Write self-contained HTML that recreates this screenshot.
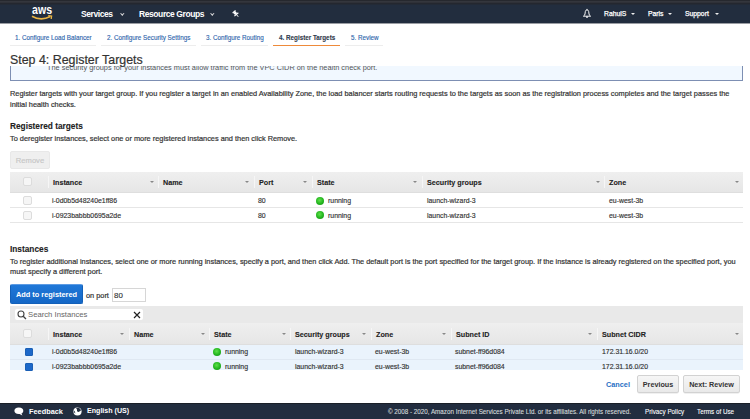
<!DOCTYPE html>
<html><head><meta charset="utf-8">
<style>
*{margin:0;padding:0;box-sizing:border-box}
html,body{width:750px;height:419px;overflow:hidden;background:#fff;font-family:"Liberation Sans",sans-serif;color:#444}
.a{position:absolute;white-space:nowrap}
#hdr{position:absolute;left:0;top:0;width:750px;height:23px;background:#222d3e;box-shadow:0 1px 0 rgba(30,38,52,0.45)}
#hdr .t{position:absolute;color:#fff;font-weight:bold;font-size:8.5px;top:9px;letter-spacing:-0.42px}
#hdr .r{position:absolute;color:#fff;font-size:6.8px;top:10px;-webkit-text-stroke:0.25px #fff}
.chev{position:absolute;width:2.6px;height:2.6px;border-right:0.9px solid #ddd;border-bottom:0.9px solid #ddd;transform:rotate(45deg)}
.car{position:absolute;width:0;height:0;border-left:2px solid transparent;border-right:2px solid transparent;border-top:2.2px solid #eee}
.tab{position:absolute;top:33.5px;font-size:6.3px;color:#2b63ab;-webkit-text-stroke:0.12px #2b63ab}
.tabu{position:absolute;top:45px;height:1px;background:#ededed}
.body{font-size:7.36px;color:#333;line-height:10.7px;-webkit-text-stroke:0.2px #333}
.thd{position:absolute;height:21px;background:linear-gradient(#efefef,#e6e6e6);border-bottom:1px solid #dedede}
.th{position:absolute;font-weight:bold;font-size:7.2px;color:#222;-webkit-text-stroke:0.1px #222}
.td{position:absolute;font-size:6.9px;color:#333;-webkit-text-stroke:0.15px #333}
.arr{position:absolute;width:0;height:0;border-left:2px solid transparent;border-right:2px solid transparent;border-top:2px solid #888}
.div{position:absolute;width:1px;background:#f6f6f6}
.cb{position:absolute;width:9px;height:9px;border:1px solid #dcdcdc;border-radius:2px;background:#f6f6f6}
.dot{position:absolute;width:8px;height:8px;border-radius:50%;background:radial-gradient(circle at 45% 40%,#5fe04a,#22b51e 55%,#178a14)}
.rl{position:absolute;height:1px;background:#e6e6e6}
#ftr{position:absolute;left:0;top:403px;width:750px;height:16px;background:#222d3f;border-top:1px solid #1a1f28}
.btn{position:absolute;border:1px solid #d2d2d2;border-radius:2px;background:linear-gradient(#f6f6f6,#e9e9e9);box-shadow:0 0.5px 0.5px rgba(0,0,0,0.12);font-weight:bold;color:#333;font-size:7.2px;text-align:center}
</style></head><body>
<div id="hdr">
  <div style="position:absolute;left:0;top:0;width:750px;height:5px;background:linear-gradient(#26282e 0,#26282e 1px,#34363d 1px,#34363d 2px,#2f3138 2px,#2f3138 3px,#24272f 3px,#24272f 4px,#232a36 4px,#232a36 5px)"></div>
  <svg class="a" style="left:30px;top:0px" width="26" height="23" viewBox="0 0 26 23"><text x="2" y="0" font-family="Liberation Sans" font-size="10.6" font-weight="bold" fill="#fff" transform="translate(0,13.6) scale(1,1.27)">aws</text><path d="M2 16.3 Q11 21.5 20.3 16.6" stroke="#e9b443" stroke-width="1.7" fill="none"/><path d="M18.2 15.6 L21.6 16 L21.2 19" stroke="#e9b443" stroke-width="1.3" fill="none"/></svg>
  <div class="t" style="left:81px">Services</div>
  <div class="chev" style="left:121px;top:12px"></div>
  <div class="t" style="left:139px">Resource Groups</div>
  <div class="chev" style="left:211px;top:12px"></div>
  <svg class="a" style="left:231.5px;top:9.7px" width="8" height="8" viewBox="0 0 10 10"><g transform="rotate(-40 5 5)" fill="#fff"><rect x="2.6" y="0.6" width="4.8" height="1.4"/><rect x="3.3" y="1.8" width="3.4" height="3.4"/><rect x="1.8" y="5" width="6.4" height="1.4"/><rect x="4.55" y="6.2" width="0.9" height="3.4"/></g></svg>
  <svg class="a" style="left:581.6px;top:8px" width="10" height="11" viewBox="0 0 10 11"><path d="M1.4 8.2 Q2.7 7.6 3 6 L3.3 3.6 Q3.6 1.9 5 1.8 Q6.4 1.9 6.7 3.6 L7 6 Q7.3 7.6 8.6 8.2 Z" stroke="#fff" stroke-width="0.95" fill="none" stroke-linejoin="round"/><circle cx="5" cy="9.1" r="0.9" fill="#fff"/><circle cx="5" cy="1.3" r="0.5" fill="#fff"/></svg>
  <div class="r" style="left:604px">RahulS</div>
  <div class="car" style="left:631px;top:13px"></div>
  <div class="r" style="left:648px">Paris</div>
  <div class="car" style="left:668px;top:13px"></div>
  <div class="r" style="left:685px">Support</div>
  <div class="car" style="left:715px;top:13px"></div>
</div>

<div class="tab" style="left:15px">1. Configure Load Balancer</div>
<div class="tabu" style="left:10px;width:86px"></div>
<div class="tab" style="left:107px">2. Configure Security Settings</div>
<div class="tabu" style="left:101px;width:95px"></div>
<div class="tab" style="left:206px">3. Configure Routing</div>
<div class="tabu" style="left:201px;width:67px"></div>
<div class="tab" style="left:279px;color:#333;font-weight:bold">4. Register Targets</div>
<div class="tabu" style="left:273px;width:67px;height:1px;background:#ee8a3a"></div>
<div class="tab" style="left:351px">5. Review</div>
<div class="tabu" style="left:345px;width:38px"></div>

<!-- info box -->
<div class="a" style="left:10px;top:60px;width:733px;height:21px;background:#f1f8ff;border:1px solid #7d8fb3;border-top:none"></div>
<div class="a body" style="left:47px;top:63px;color:#555;-webkit-text-stroke:0">The security groups for your instances must allow traffic from the VPC CIDR on the health check port.</div>
<div class="a" style="left:0;top:46px;width:750px;height:20px;background:#fff"></div>
<div class="a" style="left:10px;top:53px;font-size:12.4px;color:#333;-webkit-text-stroke:0.2px #333">Step 4: Register Targets</div>

<div class="a body" style="left:10px;top:89px">Register targets with your target group. If you register a target in an enabled Availability Zone, the load balancer starts routing requests to the targets as soon as the registration process completes and the target passes the<br>initial health checks.</div>

<div class="a" style="left:10px;top:121px;font-weight:bold;font-size:8.3px;color:#222;-webkit-text-stroke:0.1px #222">Registered targets</div>
<div class="a body" style="left:10px;top:133.5px">To deregister instances, select one or more registered instances and then click Remove.</div>
<div class="a" style="left:10px;top:151px;width:40px;height:18px;border:1px solid #e8e8e8;border-radius:2px;background:#efefef;color:#c6c6c6;font-size:7.6px;text-align:center;line-height:17.5px;-webkit-text-stroke:0.15px #c6c6c6">Remove</div>

<!-- table 1 -->
<div class="thd" style="left:10px;top:172px;width:733px"></div>
<div class="cb" style="left:23px;top:177px"></div>
<div class="div" style="left:48px;top:176px;height:12px"></div>
<div class="th" style="left:53px;top:178px">Instance</div>
<div class="arr" style="left:150px;top:181px"></div><div class="div" style="left:158px;top:176px;height:12px"></div>
<div class="th" style="left:163px;top:178px">Name</div>
<div class="arr" style="left:245px;top:181px"></div><div class="div" style="left:254px;top:176px;height:12px"></div>
<div class="th" style="left:259px;top:178px">Port</div>
<div class="arr" style="left:303px;top:181px"></div><div class="div" style="left:312px;top:176px;height:12px"></div>
<div class="th" style="left:317px;top:178px">State</div>
<div class="arr" style="left:413px;top:181px"></div><div class="div" style="left:422px;top:176px;height:12px"></div>
<div class="th" style="left:427px;top:178px">Security groups</div>
<div class="arr" style="left:596px;top:181px"></div><div class="div" style="left:604px;top:176px;height:12px"></div>
<div class="th" style="left:609px;top:178px">Zone</div>
<div class="arr" style="left:735px;top:181px"></div>

<div class="cb" style="left:23px;top:196px"></div>
<div class="td" style="left:52px;top:197px">i-0d0b5d48240e1ff86</div>
<div class="td" style="left:258px;top:197px">80</div>
<div class="dot" style="left:316px;top:196.5px"></div>
<div class="td" style="left:328px;top:197px">running</div>
<div class="td" style="left:427px;top:197px">launch-wizard-3</div>
<div class="td" style="left:609px;top:197px">eu-west-3b</div>
<div class="rl" style="left:10px;top:207px;width:733px"></div>
<div class="cb" style="left:23px;top:211px"></div>
<div class="td" style="left:52px;top:212px">i-0923babbb0695a2de</div>
<div class="td" style="left:258px;top:212px">80</div>
<div class="dot" style="left:316px;top:211px"></div>
<div class="td" style="left:328px;top:212px">running</div>
<div class="td" style="left:427px;top:212px">launch-wizard-3</div>
<div class="td" style="left:609px;top:212px">eu-west-3b</div>
<div class="rl" style="left:10px;top:222px;width:733px"></div>

<div class="a" style="left:10px;top:243.7px;font-weight:bold;font-size:8.3px;color:#222;-webkit-text-stroke:0.1px #222">Instances</div>
<div class="a body" style="left:10px;top:256.5px;line-height:10.7px">To register additional instances, select one or more running instances, specify a port, and then click Add. The default port is the port specified for the target group. If the instance is already registered on the specified port, you<br>must specify a different port.</div>

<div class="a" style="left:10px;top:284px;width:73px;height:20px;background:linear-gradient(#2078d8,#1467c6);border:1px solid #1360b8;border-top-color:#5d9be3;border-radius:2px;color:#fff;font-weight:bold;font-size:7.4px;text-align:center;line-height:20.5px">Add to registered</div>
<div class="a body" style="left:86px;top:290.5px">on port</div>
<div class="a" style="left:112px;top:288px;width:34px;height:14px;border:1px solid #d6d6d6;background:#fff;font-size:7.9px;color:#333;padding-left:1px;line-height:13.5px;-webkit-text-stroke:0.15px #333">80</div>

<!-- table 2 -->
<div class="a" style="left:10px;top:306px;width:733px;height:17px;background:#e9e9e9"></div>
<div class="a" style="left:15px;top:308.5px;width:128px;height:11.5px;background:#fff;border-radius:2px"></div>
<svg class="a" style="left:17px;top:310px" width="10" height="10" viewBox="0 0 10 10"><circle cx="4" cy="4" r="3" stroke="#444" stroke-width="1.1" fill="none"/><path d="M6.2 6.2 L9 9" stroke="#444" stroke-width="1.3"/></svg>
<div class="a" style="left:28px;top:310px;font-size:7.7px;color:#666">Search Instances</div>
<svg class="a" style="left:133px;top:311px" width="8" height="8" viewBox="0 0 8 8"><path d="M1 1 L7 7 M7 1 L1 7" stroke="#222" stroke-width="1.2"/></svg>

<div class="thd" style="left:10px;top:323px;width:733px;height:22px"></div>
<div class="cb" style="left:23px;top:329px"></div>
<div class="div" style="left:48px;top:328px;height:12px"></div>
<div class="th" style="left:53px;top:330px">Instance</div>
<div class="arr" style="left:120px;top:333px"></div><div class="div" style="left:129px;top:328px;height:12px"></div>
<div class="th" style="left:134px;top:330px">Name</div>
<div class="arr" style="left:201px;top:333px"></div><div class="div" style="left:209px;top:328px;height:12px"></div>
<div class="th" style="left:214px;top:330px">State</div>
<div class="arr" style="left:282px;top:333px"></div><div class="div" style="left:290px;top:328px;height:12px"></div>
<div class="th" style="left:295px;top:330px">Security groups</div>
<div class="arr" style="left:362px;top:333px"></div><div class="div" style="left:371px;top:328px;height:12px"></div>
<div class="th" style="left:376px;top:330px">Zone</div>
<div class="arr" style="left:442px;top:333px"></div><div class="div" style="left:451px;top:328px;height:12px"></div>
<div class="th" style="left:456px;top:330px">Subnet ID</div>
<div class="arr" style="left:588px;top:333px"></div><div class="div" style="left:597px;top:328px;height:12px"></div>
<div class="th" style="left:602px;top:330px">Subnet CIDR</div>
<div class="arr" style="left:735px;top:333px"></div>

<div class="a" style="left:10px;top:345px;width:733px;height:25px;background:#eaf3fc"></div>
<div class="cb" style="left:25px;top:348px;width:7.5px;height:7.5px;background:#1c68c9;border-color:#1a5fb5;border-radius:1px"></div>
<div class="td" style="left:52px;top:348px">i-0d0b5d48240e1ff86</div>
<div class="dot" style="left:213px;top:347.5px"></div>
<div class="td" style="left:225px;top:348px">running</div>
<div class="td" style="left:295px;top:348px">launch-wizard-3</div>
<div class="td" style="left:375px;top:348px">eu-west-3b</div>
<div class="td" style="left:455px;top:348px">subnet-ff96d084</div>
<div class="td" style="left:602px;top:348px">172.31.16.0/20</div>
<div class="rl" style="left:10px;top:359px;width:733px;background:#dfe8f2"></div>
<div class="cb" style="left:25px;top:363px;width:7.5px;height:7.5px;background:#1c68c9;border-color:#1a5fb5;border-radius:1px"></div>
<div class="td" style="left:52px;top:363px">i-0923babbb0695a2de</div>
<div class="dot" style="left:213px;top:362px"></div>
<div class="td" style="left:225px;top:363px">running</div>
<div class="td" style="left:295px;top:363px">launch-wizard-3</div>
<div class="td" style="left:375px;top:363px">eu-west-3b</div>
<div class="td" style="left:455px;top:363px">subnet-ff96d084</div>
<div class="td" style="left:602px;top:363px">172.31.16.0/20</div>

<div class="a" style="left:606px;top:380px;font-weight:bold;font-size:7.3px;color:#2a6fc4">Cancel</div>
<div class="btn" style="left:637px;top:375px;width:42px;height:18px;line-height:17px">Previous</div>
<div class="btn" style="left:683px;top:375px;width:57px;height:18px;line-height:17px">Next: Review</div>

<div id="ftr">
  <svg class="a" style="left:14px;top:3px" width="10" height="9" viewBox="0 0 10 9"><path d="M4.8 0.6 C7.8 0.6 9.3 2 9.3 3.8 C9.3 5.2 8.4 6.2 7.4 6.6 L8.4 8.4 L5.6 7 C5.3 7.05 5 7.1 4.8 7.1 C1.8 7.1 0.4 5.6 0.4 3.8 C0.4 2 1.8 0.6 4.8 0.6Z" fill="#fff"/></svg>
  <div class="a" style="left:29px;top:2.7px;color:#fff;font-weight:bold;font-size:7.35px">Feedback</div>
  <svg class="a" style="left:73px;top:3px" width="9" height="9" viewBox="0 0 9 9"><circle cx="4.5" cy="4.5" r="4.1" fill="#fff"/><path d="M3 1.2 Q4.5 2.5 4 4 Q5 5.5 6.5 4.5 Q7.5 3.5 8.2 3.6 Q7.6 1.5 5.8 0.7 Q4.5 0.5 3 1.2Z" fill="#222d3e"/><path d="M1 3.5 Q2.2 4.5 2.4 6.5 Q1.2 5.8 0.8 4.5Z" fill="#222d3e"/></svg>
  <div class="a" style="left:87px;top:2.7px;color:#fff;font-weight:bold;font-size:7.1px">English (US)</div>
  <div class="a" style="left:388px;top:3.5px;color:#d5dbdb;font-size:6.28px;-webkit-text-stroke:0.1px #d5dbdb">© 2008 - 2020, Amazon Internet Services Private Ltd. or its affiliates. All rights reserved.</div>
  <div class="a" style="left:645px;top:3.5px;color:#fff;font-size:6.3px;-webkit-text-stroke:0.08px #fff">Privacy Policy</div>
  <div class="a" style="left:697px;top:3.5px;color:#fff;font-size:6.3px;-webkit-text-stroke:0.08px #fff">Terms of Use</div>
</div>
</body></html>
